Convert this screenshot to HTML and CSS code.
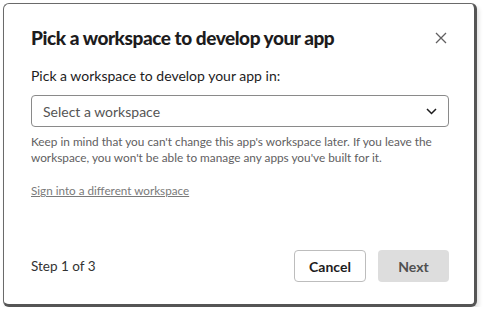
FILE: index.html
```html
<!DOCTYPE html>
<html>
<head>
<meta charset="utf-8">
<link rel="stylesheet" href="styles.css">
</head>
<body>
<div class="modal">
  <div class="header">
    <h1 class="title">Pick a workspace to develop your app</h1>
    <button class="close" aria-label="Close">
      <svg width="12" height="12" viewBox="0 0 12 12"><path d="M1 1 L11 11 M11 1 L1 11" stroke="#616061" stroke-width="1.3" fill="none"/></svg>
    </button>
  </div>
  <div class="body">
    <div class="label">Pick a workspace to develop your app in:</div>
    <div class="select">
      <span class="placeholder">Select a workspace</span>
      <svg class="chev" width="11" height="7" viewBox="0 0 11 7"><path d="M1 1 L5.5 5.5 L10 1" stroke="#1d1c1d" stroke-width="1.5" fill="none"/></svg>
    </div>
    <p class="help">Keep in mind that you can't change this app's workspace later. If you leave the workspace, you won't be able to manage any apps you've built for it.</p>
    <a class="link" href="#">Sign into a different workspace</a>
  </div>
  <div class="footer">
    <span class="step">Step 1 of 3</span>
    <div class="actions">
      <button class="btn cancel">Cancel</button>
      <button class="btn next">Next</button>
    </div>
  </div>
</div>
</body>
</html>
```
FILE: styles.css
```css
* { box-sizing: border-box; }
html, body { margin: 0; padding: 0; background: #fff; }
body {
  font-family: Lato, "Noto Sans", sans-serif;
  color: #1d1c1d;
  padding: 3px 0 0 3px;
}
.modal {
  width: 474px;
  height: 304px;
  border: 1px solid #6a6a6a;
  border-right: 3px solid #555;
  border-bottom: 3px solid #555;
  border-radius: 6px;
  background: #fff;
  display: flex;
  flex-direction: column;
  padding: 0 25px 0 27px;
  box-shadow: 2px 3px 4px rgba(0,0,0,0.12);
}
.header {
  display: flex;
  align-items: center;
  justify-content: space-between;
  height: 62px;
  padding-top: 4px;
}
.title {
  margin: 0;
  font-size: 19px;
  font-weight: 900;
  letter-spacing: -0.45px;
}
.close {
  border: 0;
  background: none;
  padding: 0;
  width: 14px;
  height: 14px;
  margin-right: 1px;
  margin-top: 2px;
  display: flex;
  align-items: center;
  justify-content: center;
}
.body { display: flex; flex-direction: column; }
.label {
  font-size: 14px;
  line-height: 20px;
}
.select {
  margin-top: 9px;
  height: 32px;
  border: 1px solid #8a8a8a;
  border-radius: 4px;
  display: flex;
  align-items: center;
  justify-content: space-between;
  padding: 0 11px 0 11px;
}
.placeholder { font-size: 14px; color: #555; }
.help {
  margin: 7px 0 0;
  font-size: 11.8px;
  line-height: 16px;
  color: #616061;
}
.link {
  margin-top: 15px;
  font-size: 11.7px;
  line-height: 18px;
  color: #7a7a7a;
  text-decoration: underline;
  align-self: flex-start;
}
.footer {
  margin-top: auto;
  display: flex;
  align-items: center;
  justify-content: space-between;
  padding-bottom: 22px;
}
.step { font-size: 13.5px; color: #333; }
.actions { display: flex; gap: 12px; }
.btn {
  font-family: Lato, "Noto Sans", sans-serif;
  font-size: 14px;
  font-weight: 700;
  height: 32px;
  border-radius: 4px;
  padding: 0;
}
.cancel {
  width: 72px;
  background: #fff;
  border: 1px solid #bdbdbd;
  color: #1d1c1d;
}
.next {
  width: 71px;
  background: #dddddd;
  border: 0;
  color: #505050;
}
```
